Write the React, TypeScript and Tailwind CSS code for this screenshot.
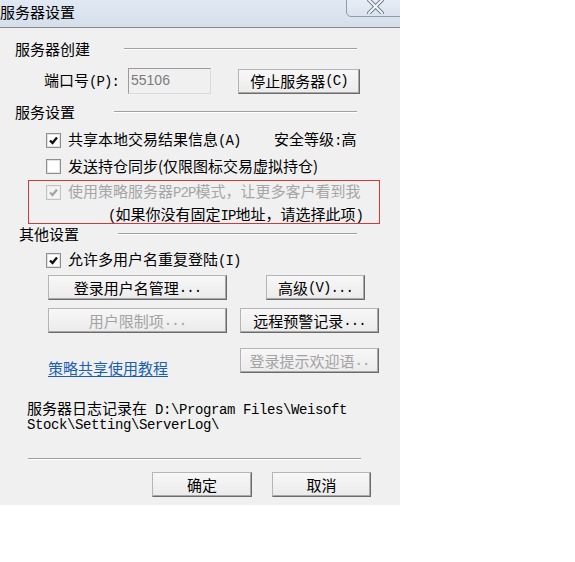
import React from "react";

function T({ s, big }: { s: string; big?: boolean }) {
  const parts = s.split(/([\x20-\x7e]+)/);
  return (
    <>
      {parts.map((p, i) =>
        p === "" ? null : /^[\x20-\x7e]+$/.test(p) ? (
          <span
            key={i}
            className={
              "whitespace-pre font-['Liberation_Mono',monospace] text-[14px] " +
              (big ? "tracking-[-0.4px]" : "tracking-[-0.9px]")
            }
          >
            {p}
          </span>
        ) : (
          <span key={i}>{p}</span>
        )
      )}
    </>
  );
}

function Cb({ checked, disabled }: { checked?: boolean; disabled?: boolean }) {
  return (
    <span
      className={
        "flex h-[15px] w-[15px] shrink-0 items-center justify-center border " +
        (disabled
          ? "border-[#c2c2c2] bg-[#f4f4f4] shadow-[inset_0_0_0_1px_#ececec]"
          : "border-[#8e8f8f] bg-white shadow-[inset_0_0_0_1px_#e2e2e2]")
      }
    >
      {checked && (
        <svg width="11" height="11" viewBox="0 0 11 11">
          <path
            d="M2 5.5 L4.5 8 L9 2.5"
            fill="none"
            stroke={disabled ? "#a6a6a6" : "#111"}
            strokeWidth="2.4"
          />
        </svg>
      )}
    </span>
  );
}

function Btn({
  children,
  className,
  disabled,
}: {
  children: React.ReactNode;
  className: string;
  disabled?: boolean;
}) {
  return (
    <div
      className={
        "flex h-[25px] shrink-0 items-center justify-center border border-[#b5b5b5] border-r-[#6b6b6b] border-b-[#6b6b6b] bg-gradient-to-b from-[#f7f7f7] to-[#ebebeb] shadow-[inset_-1px_-1px_0_#a8a8a8] " +
        (disabled ? "text-[#a3a3a3] " : "text-black ") +
        className
      }
    >
      {children}
    </div>
  );
}

function Header({ text, pl, ml }: { text: string; pl: string; ml: string }) {
  return (
    <div className={"flex h-[18px] items-center pr-[43px] " + pl}>
      <span>{text}</span>
      <div className={"h-[2px] flex-1 border-t border-[#a0a0a0] border-b border-b-white " + ml} />
    </div>
  );
}

export default function App() {
  return (
    <div className="h-[562px] w-[575px] bg-white font-['Noto_Sans_CJK_SC','Noto_Sans',sans-serif] text-[15px] leading-[18px] text-black">
      <div className="flex h-[505px] w-[400px] flex-col bg-[#f0f0f0]">
        {/* title bar */}
        <div className="relative h-[28px] shrink-0 overflow-hidden border-b border-[#8a8a8a] bg-gradient-to-b from-[#e1e9f3] to-[#d4dfeb]">
          <div className="pt-[3px] text-[15px] leading-[18px]">服务器设置</div>
          <div className="absolute left-[346px] top-[-2px] h-[19px] w-[70px] rounded-bl-[5px] border border-[#8d9caf] bg-gradient-to-b from-[#e8eef5] to-[#d9e3ee]">
            <svg className="absolute left-[20px] top-[1px]" width="17" height="14" viewBox="0 0 17 14">
              <path d="M2 0 L15 13 M15 0 L2 13" stroke="#6f7c8c" strokeWidth="4" strokeLinecap="square" />
              <path d="M2 0 L15 13 M15 0 L2 13" stroke="#f4f6f9" strokeWidth="2" strokeLinecap="square" />
            </svg>
          </div>
        </div>

        {/* 服务器创建 */}
        <div className="mt-[12px]">
          <Header text="服务器创建" pl="pl-[15px]" ml="ml-[34px]" />
        </div>
        <div className="mt-[10px] flex h-[26px] items-center pl-[44px]">
          <span className="w-[84px] shrink-0">
            <T s="端口号(P):" />
          </span>
          <div className="flex h-[26px] w-[83px] shrink-0 items-start border border-[#9c9c9c] border-r-[#dadada] border-b-[#dadada] bg-[#f0f0f0] pl-[2px] pt-[3px] font-['Liberation_Sans',sans-serif] text-[14px] leading-[16px] text-[#7b7b7b]">
            55106
          </div>
          <Btn className="ml-[27px] w-[122px]">
            <T s="停止服务器(C)" />
          </Btn>
        </div>

        {/* 服务设置 */}
        <div className="mt-[9px]">
          <Header text="服务设置" pl="pl-[15px]" ml="ml-[39px]" />
        </div>
        <div className="mt-[10px] flex h-[18px] items-center pl-[46px]">
          <div className="flex w-[228px] shrink-0 items-center">
            <Cb checked />
            <span className="ml-[7px]">
              <T s="共享本地交易结果信息(A)" />
            </span>
          </div>
          <span>
            <T s="安全等级:高" />
          </span>
        </div>
        <div className="mt-[8px] flex h-[18px] items-center pl-[46px]">
          <Cb />
          <span className="ml-[7px]">发送持仓同步(仅限图标交易虚拟持仓)</span>
        </div>

        <div className="ml-[28px] mt-[5px] h-[44px] w-[352px] border border-[#cf3b3b]">
          <div className="mt-[2px] flex h-[18px] items-center pl-[17px] text-[#a6a6a6]">
            <Cb checked disabled />
            <span className="ml-[7px]">
              <T s="使用策略服务器P2P模式，让更多客户看到我" />
            </span>
          </div>
          <div className="mt-[4px] h-[18px] pl-[79px]">
            <T s="(如果你没有固定IP地址，请选择此项)" />
          </div>
        </div>

        {/* 其他设置 */}
        <div className="mt-[1px]">
          <Header text="其他设置" pl="pl-[19px]" ml="ml-[39px]" />
        </div>
        <div className="mt-[8px] flex h-[18px] items-center pl-[46px]">
          <Cb checked />
          <span className="ml-[7px]">
            <T s="允许多用户名重复登陆(I)" />
          </span>
        </div>

        <div className="mt-[6px] flex pl-[48px]">
          <Btn className="w-[179px]">
            <T s="登录用户名管理..." />
          </Btn>
          <Btn className="ml-[39px] w-[99px]">
            <T s="高级(V)..." />
          </Btn>
        </div>
        <div className="mt-[8px] flex pl-[48px]">
          <Btn className="w-[179px]" disabled>
            <T s="用户限制项..." />
          </Btn>
          <Btn className="ml-[13px] w-[139px]">
            <T s="远程预警记录..." />
          </Btn>
        </div>
        <div className="mt-[15px] flex h-[29px] items-start pl-[48px]">
          <div className="mt-[11px] w-[192px] shrink-0">
            <span className="text-[#1a5fb0] underline decoration-[#1a5fb0] underline-offset-2">策略共享使用教程</span>
          </div>
          <Btn className="w-[139px]" disabled>
            <T s="登录提示欢迎语.." />
          </Btn>
        </div>

        <div className="mt-[23px] pl-[27px] leading-[15px]">
          <div className="h-[15px]">
            <T big s="服务器日志记录在 D:\Program Files\Weisoft" />
          </div>
          <div className="h-[15px]">
            <T big s="Stock\Setting\ServerLog\" />
          </div>
        </div>

        <div className="ml-[28px] mt-[28px] h-[2px] w-[333px] border-t border-[#a0a0a0] border-b border-b-white" />

        <div className="mt-[12px] flex">
          <Btn className="ml-[152px] w-[100px]">确定</Btn>
          <Btn className="ml-[20px] w-[99px]">取消</Btn>
        </div>
      </div>
    </div>
  );
}
